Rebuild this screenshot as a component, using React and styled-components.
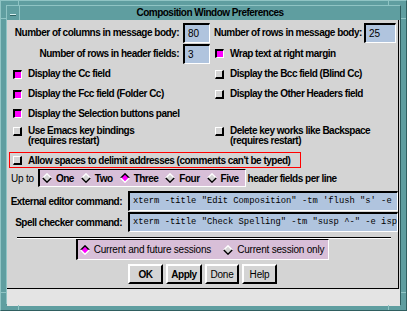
import React from "react";
import styled, { createGlobalStyle } from "styled-components";

const TEAL = "#5f9ea0";
const TEAL_LIGHT = "#8fc4c4";
const TEAL_DARK = "#2f5f60";
const GRAY = "#d4d4d4";
const ENTRY = "#b0c4de";
const THISTLE = "#d8bfd8";
const MAGENTA = "#ff00ff";

const GlobalStyle = createGlobalStyle`
  html, body {
    margin: 0;
    padding: 0;
    background: ${TEAL};
  }
  body {
    font-family: "Liberation Sans", Arial, sans-serif;
    font-size: 10px;
    letter-spacing: -0.2px;
    color: #000;
  }
`;

const Frame = styled.div`
  position: relative;
  width: 407px;
  height: 311px;
  box-sizing: border-box;
  padding: 4px 5px 5px 5px;
  background: ${TEAL};
  border-top: 1px solid ${TEAL_LIGHT};
  border-left: 1px solid ${TEAL_LIGHT};
  border-right: 1px solid ${TEAL_DARK};
  border-bottom: 1px solid ${TEAL_DARK};
`;

/* resize handle ticks drawn over the border */
const Tick = styled.span`
  position: absolute;
  background: ${TEAL_LIGHT};
  ${(p) => (p.$v ? "width: 1px; height: 5px;" : "width: 5px; height: 1px;")}
`;

const Inner = styled.div`
  display: flex;
  flex-direction: column;
  height: 100%;
  box-sizing: border-box;
  border-top: 1px solid ${TEAL_LIGHT};
  border-left: 1px solid ${TEAL_LIGHT};
  border-right: 1px solid ${TEAL_DARK};
  border-bottom: 1px solid ${TEAL_DARK};
`;

const TitleBar = styled.div`
  display: flex;
  height: 14px;
  flex: none;
  background: ${TEAL};
`;

const MenuButton = styled.div`
  width: 12px;
  flex: none;
  display: flex;
  align-items: center;
  justify-content: center;
  border-right: 1px solid ${TEAL_LIGHT};
`;

const Dash = styled.span`
  display: block;
  width: 6px;
  height: 2px;
  margin-top: 4px;
  box-sizing: border-box;
  border-top: 1px solid #d8f0f0;
  border-bottom: 1px solid ${TEAL_DARK};
`;

const Title = styled.div`
  flex: 1;
  text-align: center;
  font-weight: bold;
  letter-spacing: -0.5px;
  line-height: 14px;
`;

const Content = styled.div`
  flex: 1;
  display: flex;
  flex-direction: column;
  background: ${GRAY};
`;

const Main = styled.div`
  flex: 1;
  display: flex;
  flex-direction: column;
  margin-right: 1px;
  border-right: 1px solid #000;
  border-bottom: 1px solid #000;
  padding-bottom: 4px;
`;

const Footer = styled.div`
  height: 17px;
  flex: none;
  background: #e4e4e4;
`;

const TopGrid = styled.div`
  display: grid;
  grid-template-columns: 204px 1fr;
  grid-template-rows: 21px 21px 20px 20px 19px 26px;
  padding-top: 2px;
`;

const FieldLeft = styled.div`
  display: flex;
  align-items: center;
  justify-content: flex-end;
  gap: 4px;
  padding-right: 1px;
  font-weight: bold;
  letter-spacing: -0.5px;
  white-space: nowrap;
`;

const FieldRight = styled.div`
  display: flex;
  align-items: center;
  justify-content: space-between;
  padding-left: 3px;
  padding-right: 2px;
  font-weight: bold;
  letter-spacing: -0.5px;
  white-space: nowrap;
`;

const Entry = styled.div`
  box-sizing: border-box;
  width: ${(p) => p.$w}px;
  height: 20px;
  padding-left: 3px;
  background: ${ENTRY};
  border-top: 2px solid #000;
  border-left: 2px solid #000;
  border-right: 1px solid #fff;
  border-bottom: 1px solid #fff;
  font-weight: normal;
  letter-spacing: 0;
  line-height: 17px;
  white-space: nowrap;
  overflow: hidden;
`;

const CheckRow = styled.div`
  display: flex;
  align-items: ${(p) => (p.$top ? "flex-start" : "center")};
  gap: 6px;
  padding-left: ${(p) => (p.$right ? 4 : 6)}px;
  padding-top: ${(p) => (p.$top ? 3 : 0)}px;
  font-weight: bold;
  letter-spacing: -0.5px;
  line-height: 10px;
  white-space: nowrap;
`;

const Box = styled.span`
  flex: none;
  width: 9px;
  height: 9px;
  box-sizing: border-box;
  margin-top: ${(p) => (p.$top ? 1 : 0)}px;
  background: ${(p) => (p.$on ? MAGENTA : GRAY)};
  border-style: solid;
  border-width: ${(p) => (p.$on ? "2px 1px 1px 2px" : "1px 2px 2px 1px")};
  border-color: ${(p) =>
    p.$on ? "#000 #fff #fff #000" : "#fff #000 #000 #fff"};
`;

const Highlight = styled.div`
  display: flex;
  align-items: center;
  gap: 6px;
  box-sizing: border-box;
  width: 292px;
  height: 16px;
  margin: 3px 0 0 2px;
  padding-left: 3px;
  border: 1px solid #ff0000;
  font-weight: bold;
  letter-spacing: -0.5px;
  white-space: nowrap;
`;

const UpToRow = styled.div`
  display: flex;
  align-items: center;
  height: 18px;
  margin-top: 1px;
  padding-left: 4px;
  white-space: nowrap;
`;

const Plain = styled.span`
  font-weight: ${(p) => (p.$bold ? "bold" : "normal")};
  letter-spacing: ${(p) => (p.$bold ? -0.5 : -0.2)}px;
  margin: ${(p) => p.$m || "0"};
`;

const RadioPanel = styled.div`
  display: flex;
  align-items: center;
  gap: ${(p) => p.$gap}px;
  box-sizing: border-box;
  height: ${(p) => p.$h}px;
  padding: 0 ${(p) => p.$pr}px 0 2px;
  background: ${THISTLE};
  border-top: 1px solid #000;
  border-left: 2px solid #000;
  border-right: 1px solid #fff;
  border-bottom: 1px solid #fff;
`;

const RadioItem = styled.span`
  display: flex;
  align-items: center;
  gap: 4px;
  font-weight: ${(p) => (p.$light ? "normal" : "bold")};
  letter-spacing: ${(p) => (p.$light ? -0.2 : -0.5)}px;
`;

const CommandGrid = styled.div`
  display: grid;
  grid-template-columns: 115px 270px;
  grid-auto-rows: 20px;
  column-gap: 6px;
  row-gap: 1px;
  margin-top: 4px;
`;

const CmdLabel = styled.div`
  display: flex;
  align-items: center;
  justify-content: flex-end;
  font-weight: bold;
  letter-spacing: -0.5px;
  white-space: nowrap;
`;

const CmdEntry = styled(Entry)`
  width: 270px;
  font-family: "Liberation Mono", monospace;
  font-size: 8.8px;
  line-height: 17px;
`;

const Separator = styled.div`
  height: 1px;
  margin: 5px 0 0 10px;
  width: 374px;
  background: #000;
  border-bottom: 1px solid #fff;
`;

const SessionWrap = styled.div`
  display: flex;
  justify-content: center;
`;

const Buttons = styled.div`
  display: flex;
  justify-content: center;
  gap: 3px;
  margin-top: 4px;
`;

const Button = styled.button`
  box-sizing: border-box;
  width: ${(p) => p.$w || 35}px;
  height: 20px;
  padding: 0;
  background: ${GRAY};
  font-family: inherit;
  font-size: 10px;
  font-weight: ${(p) => (p.$light ? "normal" : "bold")};
  letter-spacing: ${(p) => (p.$light ? -0.2 : -0.5)}px;
  color: #000;
  border-style: solid;
  border-width: 2px;
  border-color: #fff #000 #000 #fff;
`;

const Diamond = ({ on }) => (
  <svg width="10" height="10" viewBox="0 0 10 10">
    <polygon points="5,1 9,5 5,9 1,5" fill={on ? MAGENTA : GRAY} />
    <polyline
      points="0.8,5 5,0.8 9.2,5"
      fill="none"
      stroke={on ? "#000" : "#fff"}
      strokeWidth="1.4"
    />
    <polyline
      points="0.8,5 5,9.2 9.2,5"
      fill="none"
      stroke={on ? "#fff" : "#000"}
      strokeWidth="1.4"
    />
  </svg>
);

const Check = ({ on, right, top, children }) => (
  <CheckRow $right={right} $top={top}>
    <Box $on={on} $top={top} />
    <div>{children}</div>
  </CheckRow>
);

export default function App() {
  return (
    <>
      <GlobalStyle />
      <Frame>
        <Tick $v style={{ left: 17, top: 0 }} />
        <Tick $v style={{ left: 387, top: 0 }} />
        <Tick $v style={{ left: 17, bottom: 0 }} />
        <Tick $v style={{ left: 387, bottom: 0 }} />
        <Tick style={{ left: 0, top: 17 }} />
        <Tick style={{ right: 0, top: 17 }} />
        <Tick style={{ left: 0, top: 291 }} />
        <Tick style={{ right: 0, top: 291 }} />
        <Inner>
          <TitleBar>
            <MenuButton>
              <Dash />
            </MenuButton>
            <Title>Composition Window Preferences</Title>
          </TitleBar>
          <Content>
            <Main>
              <TopGrid>
                <FieldLeft>
                  Number of columns in message body:
                  <Entry $w={27}>80</Entry>
                </FieldLeft>
                <FieldRight>
                  Number of rows in message body:
                  <Entry $w={32}>25</Entry>
                </FieldRight>
                <FieldLeft>
                  Number of rows in header fields:
                  <Entry $w={27}>3</Entry>
                </FieldLeft>
                <Check on right>
                  Wrap text at right margin
                </Check>
                <Check on>Display the Cc field</Check>
                <Check right>Display the Bcc field (Blind Cc)</Check>
                <Check on>Display the Fcc field (Folder Cc)</Check>
                <Check right>Display the Other Headers field</Check>
                <Check on>Display the Selection buttons panel</Check>
                <div />
                <Check top>
                  Use Emacs key bindings
                  <br />
                  (requires restart)
                </Check>
                <Check right top>
                  Delete key works like Backspace
                  <br />
                  (requires restart)
                </Check>
              </TopGrid>
              <Highlight>
                <Box />
                Allow spaces to delimit addresses (comments can't be typed)
              </Highlight>
              <UpToRow>
                <Plain $m="0 4px 0 0">Up to</Plain>
                <RadioPanel $h={18} $gap={7} $pr={6}>
                  <RadioItem>
                    <Diamond />
                    One
                  </RadioItem>
                  <RadioItem>
                    <Diamond />
                    Two
                  </RadioItem>
                  <RadioItem>
                    <Diamond on />
                    Three
                  </RadioItem>
                  <RadioItem>
                    <Diamond />
                    Four
                  </RadioItem>
                  <RadioItem>
                    <Diamond />
                    Five
                  </RadioItem>
                </RadioPanel>
                <Plain $bold $m="0 0 0 2px">
                  header fields per line
                </Plain>
              </UpToRow>
              <CommandGrid>
                <CmdLabel>External editor command:</CmdLabel>
                <CmdEntry>
                  xterm -title "Edit Composition" -tm 'flush "s' -e vi
                </CmdEntry>
                <CmdLabel>Spell checker command:</CmdLabel>
                <CmdEntry>
                  xterm -title "Check Spelling" -tm "susp ^-" -e ispell
                </CmdEntry>
              </CommandGrid>
              <Separator />
              <SessionWrap>
                <RadioPanel $h={21} $gap={12} $pr={4}>
                  <RadioItem $light>
                    <Diamond on />
                    Current and future sessions
                  </RadioItem>
                  <RadioItem $light>
                    <Diamond />
                    Current session only
                  </RadioItem>
                </RadioPanel>
              </SessionWrap>
              <Buttons>
                <Button>OK</Button>
                <Button $w={36}>Apply</Button>
                <Button $light $w={34}>
                  Done
                </Button>
                <Button $light>Help</Button>
              </Buttons>
            </Main>
            <Footer />
          </Content>
        </Inner>
      </Frame>
    </>
  );
}
